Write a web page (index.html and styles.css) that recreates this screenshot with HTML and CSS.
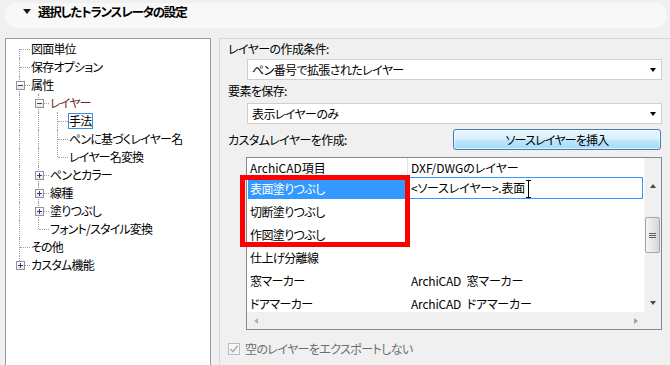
FILE: index.html
```html
<!DOCTYPE html>
<html lang="ja">
<head>
<meta charset="utf-8">
<title>選択したトランスレータの設定</title>
<link rel="stylesheet" href="styles.css">
</head>
<body>
<div class="header">
  <span class="tri"></span>
  <span class="title">選択したトランスレータの設定</span>
</div>
<div class="main">
  <div class="tree">
    <div class="row"><span class="c f"></span><span class="tx">図面単位</span></div>
    <div class="row"><span class="c t"></span><span class="tx">保存オプション</span></div>
    <div class="row"><span class="c t"><span class="box minus"></span></span><span class="tx">属性</span></div>
    <div class="row"><span class="c v"></span><span class="c t"><span class="box minus"></span></span><span class="tx red">レイヤー</span></div>
    <div class="row"><span class="c v"></span><span class="c v"></span><span class="c t"></span><span class="tx"><span class="focus">手法</span></span></div>
    <div class="row"><span class="c v"></span><span class="c v"></span><span class="c t"></span><span class="tx">ペンに基づくレイヤー名</span></div>
    <div class="row"><span class="c v"></span><span class="c v"></span><span class="c l"></span><span class="tx">レイヤー名変換</span></div>
    <div class="row"><span class="c v"></span><span class="c t"><span class="box plus"></span></span><span class="tx">ペンとカラー</span></div>
    <div class="row"><span class="c v"></span><span class="c t"><span class="box plus"></span></span><span class="tx">線種</span></div>
    <div class="row"><span class="c v"></span><span class="c t"><span class="box plus"></span></span><span class="tx">塗りつぶし</span></div>
    <div class="row"><span class="c v"></span><span class="c l"></span><span class="tx">フォント/スタイル変換</span></div>
    <div class="row"><span class="c t"></span><span class="tx">その他</span></div>
    <div class="row"><span class="c l"><span class="box plus"></span></span><span class="tx">カスタム機能</span></div>
  </div>

  <div class="settings">
    <div class="label l1">レイヤーの作成条件:</div>
    <div class="combo c1"><span>ペン番号で拡張されたレイヤー</span><span class="darr"></span></div>
    <div class="label l2">要素を保存:</div>
    <div class="combo c2"><span>表示レイヤーのみ</span><span class="darr"></span></div>
    <div class="row3">
      <span class="label l3">カスタムレイヤーを作成:</span>
      <button class="btn">ソースレイヤーを挿入</button>
    </div>

    <div class="table">
      <div class="body">
        <div class="thead">
          <div class="hc first">ArchiCAD項目</div>
          <div class="hc">DXF/DWGのレイヤー</div>
        </div>
        <div class="tr">
          <div class="td sel">表面塗りつぶし</div>
          <div class="td edit">&lt;ソースレイヤー&gt;.表面<span class="ibeam"></span></div>
        </div>
        <div class="tr"><div class="td">切断塗りつぶし</div><div class="td"></div></div>
        <div class="tr"><div class="td">作図塗りつぶし</div><div class="td"></div></div>
        <div class="tr"><div class="td">仕上げ分離線</div><div class="td"></div></div>
        <div class="tr"><div class="td">窓マーカー</div><div class="td lat">ArchiCAD 窓マーカー</div></div>
        <div class="tr"><div class="td">ドアマーカー</div><div class="td lat">ArchiCAD ドアマーカー</div></div>
      </div>
      <div class="vscroll">
        <div class="vfill"></div>
        <div class="sbtn"><span class="a-up"></span></div>
        <div class="track"><div class="thumb"><span></span><span></span><span></span></div></div>
        <div class="sbtn"><span class="a-down"></span></div>
      </div>
      <div class="hscroll">
        <div class="hbtn"><span class="a-left"></span></div>
        <div class="hbtn"><span class="a-right"></span></div>
      </div>
      <div class="corner"></div>
      <div class="mark"></div>
    </div>

    <div class="check">
      <span class="cb"><svg width="10" height="10" viewBox="0 0 10 10"><path d="M1.5 5.2 L4 7.8 L8.6 1.8" fill="none" stroke="#a8a8a8" stroke-width="1.4"/></svg></span>
      <span class="ctext">空のレイヤーをエクスポートしない</span>
    </div>
  </div>
</div>
</body>
</html>
```

FILE: styles.css
```css
* { box-sizing: border-box; }
html, body { margin: 0; padding: 0; }
body {
  width: 670px;
  height: 365px;
  overflow: hidden;
  background: #f0f0f0;
  font-family: "Noto Sans CJK JP", "Noto Sans", sans-serif;
  font-size: 12px;
  letter-spacing: -0.6px;
  color: #000;
  font-feature-settings: "palt";
}

/* header */
.header {
  margin: 3px 3px 0 5px;
  height: 25px;
  border-radius: 12px;
  background: #f8f8f8;
  display: flex;
  align-items: flex-start;
  padding-left: 18px;
  gap: 7px;
}
.tri {
  width: 0;
  height: 0;
  border-left: 4.5px solid transparent;
  border-right: 4.5px solid transparent;
  border-top: 5px solid #1a1a1a;
  margin-top: 6px;
}
.title {
  font-weight: bold;
  font-size: 12.5px;
  letter-spacing: -1.2px;
  line-height: 18px;
}

.main {
  display: flex;
  gap: 8px;
  margin-top: 10px;
}

/* tree */
.tree {
  margin-left: 5px;
  width: 206px;
  height: 340px;
  border: 1px solid #9a9a9a;
  background: #fff;
  padding: 1px 0 0 4px;
  flex: none;
  letter-spacing: -0.8px;
}
.row {
  display: flex;
  height: 18px;
  align-items: flex-start;
}
.c {
  width: 19px;
  height: 18px;
  position: relative;
  flex: none;
  display: flex;
  justify-content: center;
  align-items: flex-start;
}
.c::before, .c::after { content: ""; position: absolute; }
.v::before, .t::before { left: 9px; top: 0; bottom: 0; border-left: 1px dotted #a0a0a0; }
.l::before { left: 9px; top: 0; height: 9px; border-left: 1px dotted #a0a0a0; }
.f::before { left: 9px; top: 9px; bottom: 0; border-left: 1px dotted #a0a0a0; }
.t::after, .l::after, .f::after { left: 10px; right: -1px; top: 9px; border-top: 1px dotted #a0a0a0; }
.box {
  width: 9px;
  height: 9px;
  margin-top: 5px;
  margin-left: 1px;
  border: 1px solid #939393;
  background: linear-gradient(#ffffff, #e6e6e6);
  position: relative;
  z-index: 1;
}
.box::before {
  content: "";
  position: absolute;
  left: 1px;
  top: 3px;
  width: 5px;
  height: 1px;
  background: #2b3f87;
}
.box.plus::after {
  content: "";
  position: absolute;
  left: 3px;
  top: 1px;
  width: 1px;
  height: 5px;
  background: #2b3f87;
}
.tx {
  padding-left: 2px;
  white-space: nowrap;
  line-height: 17px;
}
.red { color: #6e1f1f; }
.focus {
  display: inline-block;
  border: 1px solid #3a8ee6;
  line-height: 14px;
  padding: 0 1px 0 0;
  margin-left: -1px;
}

/* settings */
.settings {
  width: 451px;
  flex: none;
  border-top: 1px solid #d7d7d7;
  border-left: 1px solid #d7d7d7;
  padding: 0 8px;
  height: 340px;
}
.label { display: block; white-space: nowrap; }
.l1 { height: 19px; line-height: 19px; }
.l2 { height: 22px; line-height: 22px; }
.combo {
  height: 21px;
  margin: 1px 0 0 19px;
  border: 1px solid #cfcfcf;
  background: #fff;
  display: flex;
  align-items: center;
  justify-content: space-between;
  padding: 0 5px 0 4px;
  line-height: 19px;
}
.darr {
  width: 0;
  height: 0;
  border-left: 3.5px solid transparent;
  border-right: 3.5px solid transparent;
  border-top: 4px solid #000;
}
.row3 {
  margin-top: 5px;
  height: 21px;
  display: flex;
  justify-content: space-between;
  align-items: flex-start;
}
.l3 { padding-top: 2px; line-height: 18px; }
.btn {
  width: 208px;
  height: 21px;
  margin-right: 1px;
  border: 1px solid #3c7fb1;
  border-radius: 3px;
  background: linear-gradient(#eaf6fd 0%, #d9f0fc 45%, #bee6fd 55%, #a7d9f5 100%);
  box-shadow: inset 0 0 0 1px rgba(255,255,255,0.6);
  font-family: inherit;
  font-size: 12px;
  letter-spacing: -0.8px;
  font-feature-settings: "palt";
  color: #000;
  padding: 0;
  line-height: 18px;
}

/* table */
.table {
  position: relative;
  margin: 7px 0 0 18px;
  width: 416px;
  height: 173px;
  border: 1px solid #828790;
  background: #fff;
  display: grid;
  grid-template-columns: 1fr 17px;
  grid-template-rows: 1fr 17px;
}
.body { overflow: hidden; }
.thead {
  display: grid;
  grid-template-columns: 161px 1fr;
  height: 19px;
}
.hc { padding-left: 3px; line-height: 19px; white-space: nowrap; letter-spacing: 0; }
.hc.first { border-right: 1px solid #e3e3e3; }
.tr {
  display: grid;
  grid-template-columns: 161px 1fr;
  height: 23px;
}
.td { padding-left: 3px; line-height: 23px; white-space: nowrap; }
.td.lat { letter-spacing: -0.2px; word-spacing: 3px; }
.td.sel {
  margin: 2px 3px 1px 1px;
  padding-left: 2px;
  background: #3399ff;
  color: #fff;
  line-height: 20px;
}
.td.edit {
  margin: 0 1px 1px 0;
  border: 1px solid #3399ff;
  padding-left: 2px;
  line-height: 20px;
  display: flex;
  align-items: center;
  letter-spacing: -0.2px;
}
.ibeam {
  display: inline-block;
  width: 5px;
  height: 18px;
  margin-left: 1px;
  margin-top: 2px;
  border-top: 1px solid #000;
  border-bottom: 1px solid #000;
  background: linear-gradient(90deg, transparent 2px, #000 2px, #000 3px, transparent 3px);
}

.vscroll {
  background: #f0f0f0;
  border-left: 1px solid #f7f7f7;
  display: flex;
  flex-direction: column;
}
.vfill { height: 19px; background: #f0f0f0; }
.sbtn {
  height: 18px;
  display: flex;
  align-items: center;
  justify-content: center;
}
.track { flex: 1; padding-top: 22px; }
.thumb {
  margin: 0 1px 0 0;
  height: 36px;
  border: 1px solid #a6a6a6;
  border-radius: 2px;
  background: linear-gradient(90deg, #f4f4f4, #e4e4e4 60%, #d6d6d6);
  display: flex;
  flex-direction: column;
  align-items: center;
  justify-content: center;
  gap: 1px;
}
.thumb span { width: 7px; height: 1px; background: #5c5c5c; }
.a-up {
  width: 0; height: 0;
  border-left: 3.5px solid transparent;
  border-right: 3.5px solid transparent;
  border-bottom: 4px solid #4a4a4a;
}
.a-down {
  width: 0; height: 0;
  border-left: 3.5px solid transparent;
  border-right: 3.5px solid transparent;
  border-top: 4px solid #4a4a4a;
}
.hscroll {
  background: #f0f0f0;
  display: flex;
  justify-content: space-between;
}
.hbtn {
  width: 17px;
  display: flex;
  align-items: center;
  justify-content: center;
}
.a-left {
  width: 0; height: 0;
  border-top: 3.5px solid transparent;
  border-bottom: 3.5px solid transparent;
  border-right: 4px solid #b4b4b4;
}
.a-right {
  width: 0; height: 0;
  border-top: 3.5px solid transparent;
  border-bottom: 3.5px solid transparent;
  border-left: 4px solid #a0a0a0;
}
.corner { background: #f0f0f0; }

.mark {
  position: absolute;
  left: -7px;
  top: 17px;
  width: 170px;
  height: 72px;
  border: 5px solid #ff0000;
}

/* checkbox */
.check {
  margin-top: 10px;
  height: 18px;
  display: flex;
  align-items: center;
  gap: 5px;
}
.cb {
  width: 12px;
  height: 12px;
  border: 1px solid #bcbcbc;
  background: #f6f6f6;
  display: flex;
  align-items: center;
  justify-content: center;
}
.ctext { color: #6d6d6d; line-height: 18px; }
```
